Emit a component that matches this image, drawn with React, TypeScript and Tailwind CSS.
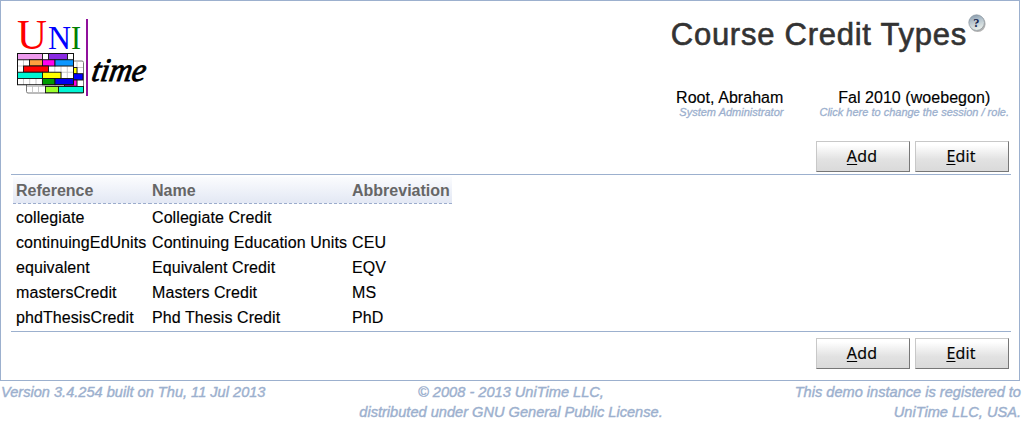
type Block = { x: number; y: number; w: number; fill: string };

const frontBlocks: Block[] = [
  { x: 17.5, y: 53.5, w: 25, fill: "#ee9bee" },
  { x: 48.5, y: 53.5, w: 19, fill: "#8a2be2" },
  { x: 29.5, y: 59.75, w: 13, fill: "#ffa040" },
  { x: 42.5, y: 59.75, w: 12.5, fill: "#ff00ee" },
  { x: 55, y: 59.75, w: 18.5, fill: "#0a96ff" },
  { x: 23.5, y: 66, w: 25, fill: "#ff0000" },
  { x: 17.5, y: 72.25, w: 25, fill: "#00f5d4" },
  { x: 42.5, y: 72.25, w: 18.5, fill: "#ffff00" },
  { x: 42.5, y: 78.5, w: 12.5, fill: "#009a00" },
  { x: 55, y: 78.5, w: 18.5, fill: "#0000ee" },
];

const backBlocks: Block[] = [
  { x: 58, y: 67.5, w: 19, fill: "#ffff00" },
  { x: 58, y: 73.7, w: 25, fill: "#0000ff" },
  { x: 64.5, y: 80, w: 12.5, fill: "#ff00dd" },
  { x: 45.5, y: 86.5, w: 13, fill: "#9cff2e" },
  { x: 58.5, y: 86.5, w: 25, fill: "#00f5d4" },
];

const Blocks = ({ items }: { items: Block[] }) => (
  <>
    {items.map((b, i) => (
      <rect key={i} x={b.x} y={b.y} width={b.w} height={6.25} fill={b.fill} stroke="#111" strokeWidth={0.9} />
    ))}
  </>
);

const Logo = () => (
  <svg width="140" height="90" viewBox="12 12 140 90" className="block" aria-label="UniTime">
    <g style={{ fontFamily: '"Liberation Serif", serif' }}>
      <text x="17" y="49" fontSize="42" fill="#ff0000" textLength="30" lengthAdjust="spacingAndGlyphs">U</text>
      <text x="48" y="49" fontSize="33.5" fill="#0000ff" textLength="23" lengthAdjust="spacingAndGlyphs">N</text>
      <text x="71" y="49" fontSize="33.5" fill="#008000" textLength="10" lengthAdjust="spacingAndGlyphs">I</text>
    </g>
    <rect x="26.5" y="61" width="57" height="32" rx="1.5" fill="#fff" stroke="#777" />
    <path d="M32.5 86v7M38.5 86v7M70.5 61v32M77 61v32M27 86.5h56M74 67.5h9M74 80h9" stroke="#bbb" strokeWidth=".8" />
    <Blocks items={backBlocks} />
    <rect x="17.5" y="53.5" width="56" height="31.25" fill="#fff" />
    <path
      d="M23.5 54v31M29.7 54v31M36 54v31M42.3 54v31M48.5 54v31M54.8 54v31M61 54v31M67.3 54v31M17.5 59.75h56M17.5 66h56M17.5 72.25h56M17.5 78.5h56"
      stroke="#bbb"
      strokeWidth=".8"
    />
    <Blocks items={frontBlocks} />
    <rect x="17.5" y="53.5" width="56" height="31.25" fill="none" stroke="#111" />
    <rect x="86" y="19" width="2" height="77" fill="#90109c" />
    <text
      transform="translate(90.5 80.5) skewX(-10)"
      fontSize="33"
      fontStyle="italic"
      fill="#000"
      stroke="#000"
      strokeWidth=".9"
      textLength="54"
      lengthAdjust="spacingAndGlyphs"
      style={{ fontFamily: '"Brush Script MT", "Liberation Serif", serif' }}
    >
      time
    </text>
  </svg>
);

const HelpIcon = () => (
  <svg width="19" height="19" viewBox="0 0 19 19" className="block">
    <defs>
      <linearGradient id="ball" x1="0" y1="0" x2="0.3" y2="1">
        <stop offset="0" stopColor="#7f94a8" />
        <stop offset=".45" stopColor="#b3c1cb" />
        <stop offset="1" stopColor="#e6ece8" />
      </linearGradient>
    </defs>
    <circle cx="9.6" cy="10" r="8" fill="#666" opacity=".5" />
    <circle cx="8.6" cy="8.6" r="7.8" fill="url(#ball)" stroke="#8c979f" strokeWidth=".7" />
    <text x="8.4" y="12.6" textAnchor="middle" fontSize="12.5" fontWeight="bold" fill="#15254f" style={{ fontFamily: '"Liberation Serif", serif' }}>
      ?
    </text>
  </svg>
);

const PushButton = ({ label }: { label: string }) => (
  <button className="h-[31px] w-[94px] border border-t-[#c8c8c8] border-r-[#777] border-b-[#777] border-l-[#c8c8c8] bg-linear-to-b from-white from-10% via-[#e2e2e2] via-60% to-[#dadada] pr-[2px] pb-px text-center font-['Open_Sans',sans-serif] text-base leading-7 tracking-[0.2px] text-black [-webkit-text-stroke:0.2px]">
    <span className="underline decoration-1 underline-offset-2">{label[0]}</span>
    {label.slice(1)}
  </button>
);

const Actions = () => (
  <div className="flex justify-end gap-[5px] pr-[2px]">
    <PushButton label="Add" />
    <PushButton label="Edit" />
  </div>
);

const rows = [
  ["collegiate", "Collegiate Credit", ""],
  ["continuingEdUnits", "Continuing Education Units", "CEU"],
  ["equivalent", "Equivalent Credit", "EQV"],
  ["mastersCredit", "Masters Credit", "MS"],
  ["phdThesisCredit", "Phd Thesis Credit", "PhD"],
];

const columns = ["Reference", "Name", "Abbreviation"];

export default function App() {
  return (
    <div className="h-[421px] w-[1022px] overflow-hidden bg-white font-['Liberation_Sans',Arial,sans-serif] text-base text-black">
      <div className="flex h-[381px] w-[1020px] flex-col border border-[#9cb0ce] pr-[8px] pl-[10px]">
        <header className="flex h-[140px] justify-between">
          <div className="pt-[11px] pl-px">
            <Logo />
          </div>
          <div className="flex flex-col items-end pr-[2px]">
            <div className="flex h-[87px] items-start pr-[22px]">
              <h1 className="pt-[16px] pr-px text-[31px] leading-[36px] tracking-[0.75px] text-[#333] [-webkit-text-stroke:0.6px]">
                Course Credit Types
              </h1>
              <div className="pt-[13px]">
                <HelpIcon />
              </div>
            </div>
            <div className="flex gap-[36px]">
              <div className="flex flex-col items-end">
                <span className="leading-[20px] tracking-[0.05px] [-webkit-text-stroke:0.15px]">Root, Abraham</span>
                <span className="text-[11px] leading-[9px] text-[#9cb0ce] italic [-webkit-text-stroke:0.3px]">System Administrator</span>
              </div>
              <div className="flex flex-col items-center">
                <span className="leading-[20px] tracking-[0.05px] [-webkit-text-stroke:0.15px]">Fal 2010 (woebegon)</span>
                <span className="text-[11px] leading-[9px] text-[#9cb0ce] italic [-webkit-text-stroke:0.3px]">
                  Click here to change the session / role.
                </span>
              </div>
            </div>
          </div>
        </header>
        <Actions />
        <main className="mt-[2px] h-[158px] border-y border-[#9cb0ce] pt-[2px] pl-[2px]">
          <div className="grid w-[439px] grid-cols-[136px_200px_103px]">
            {columns.map((c) => (
              <div key={c} className="h-[27px]">
                <div className="h-[26px] bg-linear-to-b from-[#fbfcfe] to-[#e3e8f4] pt-[2px] pl-[3px] leading-[24px] font-bold text-[#666]">
                  {c}
                </div>
                <div className="h-px bg-[repeating-linear-gradient(to_right,#9caccd_0_3px,#f2f5fa_3px_5px)]" />
              </div>
            ))}
            {rows.flatMap((r) =>
              r.map((cell, i) => (
                <div
                  key={r[0] + i}
                  className="h-[25px] pt-px pl-[3px] leading-[25px] tracking-[0.08px] whitespace-nowrap [-webkit-text-stroke:0.15px]"
                >
                  {cell}
                </div>
              )),
            )}
          </div>
        </main>
        <div className="pt-[6px]">
          <Actions />
        </div>
      </div>
      <footer className="grid grid-cols-3 pt-px text-[14.6px] leading-[20px] text-[#9cb0ce] italic [-webkit-text-stroke:0.4px]">
        <div className="pl-px">Version 3.4.254 built on Thu, 11 Jul 2013</div>
        <div className="text-center">
          © 2008 - 2013 UniTime LLC,
          <br />
          distributed under GNU General Public License.
        </div>
        <div className="pr-px text-right">
          This demo instance is registered to
          <br />
          UniTime LLC, USA.
        </div>
      </footer>
    </div>
  );
}
